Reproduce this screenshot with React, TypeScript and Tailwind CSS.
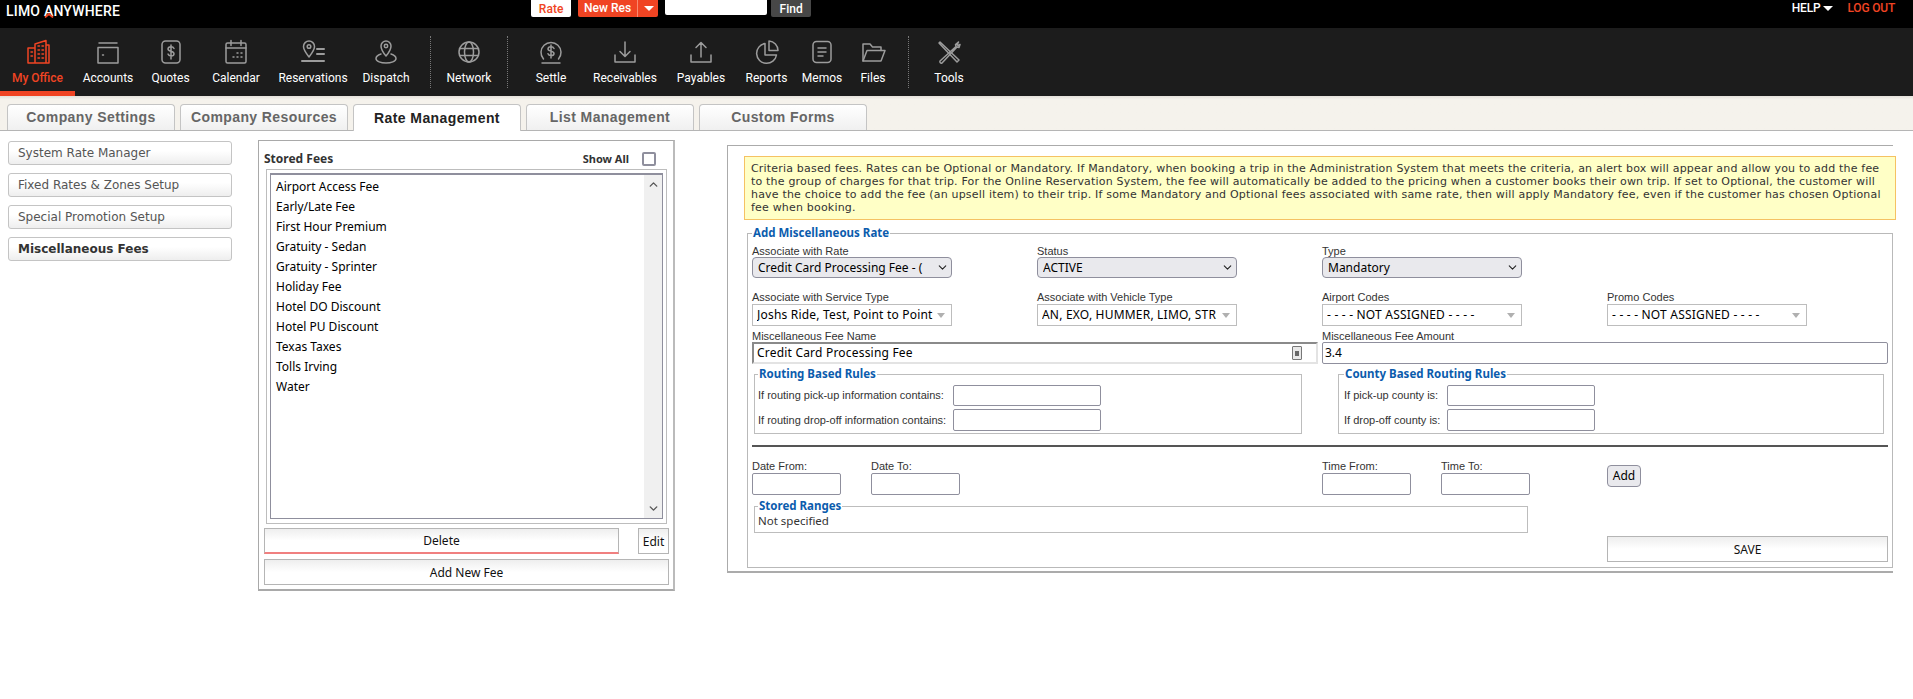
import React from "react";
import { ChevronDown, ChevronUp } from "lucide-react";

const stroke = {
  fill: "none",
  strokeWidth: 1.5,
  strokeLinecap: "round" as const,
  strokeLinejoin: "round" as const,
};

const Icon = ({ children, color }: { children: React.ReactNode; color?: string }) => (
  <svg width="28" height="28" viewBox="0 0 28 28" {...stroke} stroke={color || "#9c9c9c"}>
    {children}
  </svg>
);

const navItems = [
  {
    label: "My Office",
    w: "w-[75px]",
    active: true,
    icon: (
      <Icon color="#f04423">
        <path d="M4 10h7v15H4zM11 25V6l11-3.500V25M4 25h21M22 7h3v18" />
        <path d="M14 8h1.500M18 8h1.500M14 12h1.500M18 12h1.500M14 16h1.500M18 16h1.500M14 20h1.500M18 20h1.500M7 14h1.500M7 18h1.500" />
      </Icon>
    ),
  },
  {
    label: "Accounts",
    w: "w-[66px]",
    icon: (
      <Icon>
        <path d="M5 5h18M4 9.500h20V25H4z" />
        <path d="M8.500 17h1" />
      </Icon>
    ),
  },
  {
    label: "Quotes",
    w: "w-[59px]",
    icon: (
      <Icon>
        <rect x="5" y="3" width="18" height="22" rx="3.500" />
        <path d="M17 10.500c-.5-1.200-1.600-1.800-3-1.800-1.700 0-3 .8-3 2.300 0 3 6 1.500 6 4.700 0 1.500-1.300 2.300-3 2.300-1.500 0-2.600-.7-3-1.900M14 7v14" />
      </Icon>
    ),
  },
  {
    label: "Calendar",
    w: "w-[72px]",
    icon: (
      <Icon>
        <rect x="4" y="5" width="20" height="20" rx="1.500" />
        <path d="M4 10h20M9 2.500v5M19 2.500v5M15 15h1M19 15h1M11 19h1M15 19h1M19 19h1" />
      </Icon>
    ),
  },
  {
    label: "Reservations",
    w: "w-[82px]",
    icon: (
      <Icon>
        <path d="M10 19c-3-4-5.500-7-5.500-10.500a5.500 5.500 0 0 1 11 0C15.500 12 13 15 10 19z" />
        <circle cx="10" cy="8.500" r="1.800" />
        <path d="M18 11h7M18 16h7M3 23h22" strokeWidth="2" />
      </Icon>
    ),
  },
  {
    label: "Dispatch",
    w: "w-[64px]",
    icon: (
      <Icon>
        <path d="M14 18c-3-3.500-5-6.500-5-10a5 5 0 0 1 10 0c0 3.500-2 6.500-5 10z" />
        <circle cx="14" cy="8" r="1.700" />
        <path d="M9 16c-3 1-5 2.500-5 4.500C4 23.500 9 25 14 25s10-1.500 10-4.500c0-2-2-3.500-5-4.500" />
      </Icon>
    ),
  },
  { sep: true, spacer: "ml-[12px]" },
  {
    label: "Network",
    w: "w-[76px]",
    icon: (
      <Icon>
        <circle cx="14" cy="14" r="10" />
        <ellipse cx="14" cy="14" rx="4.500" ry="10" />
        <path d="M4.500 10.500h19M4.500 17.500h19" />
      </Icon>
    ),
  },
  { sep: true },
  {
    label: "Settle",
    w: "w-[86px]",
    icon: (
      <Icon>
        <path d="M6.500 21a10 10 0 1 1 15 0M5 25h18" />
        <path d="M17 10.500c-.5-1.100-1.500-1.700-3-1.700-1.700 0-3 .8-3 2.200 0 2.800 6 1.400 6 4.400 0 1.400-1.300 2.200-3 2.200-1.500 0-2.600-.7-3-1.800M14 7v13" />
      </Icon>
    ),
  },
  {
    label: "Receivables",
    w: "w-[62px]",
    icon: (
      <Icon>
        <path d="M14 4v14M9 13.500l5 5 5-5M4 17v7h20v-7" />
      </Icon>
    ),
  },
  {
    label: "Payables",
    w: "w-[90px]",
    icon: (
      <Icon>
        <path d="M14 19V5M9 9.500l5-5 5 5M4 17v7h20v-7" />
      </Icon>
    ),
  },
  {
    label: "Reports",
    w: "w-[41px]",
    icon: (
      <Icon>
        <path d="M12 5.500A10 10 0 1 0 23.500 17H12z" />
        <path d="M16 3a9.500 9.500 0 0 1 9 9.500h-9z" />
      </Icon>
    ),
  },
  {
    label: "Memos",
    w: "w-[70px]",
    icon: (
      <Icon>
        <rect x="5" y="3.500" width="18" height="21" rx="3.500" />
        <path d="M10 10h8M10 14h8M10 18h5" />
      </Icon>
    ),
  },
  {
    label: "Files",
    w: "w-[32px]",
    icon: (
      <Icon>
        <path d="M4 23V6h7l2.500 3H22v3.500" />
        <path d="M4 23l4-10.500h18L22 23z" />
      </Icon>
    ),
  },
  { sep: true, spacer: "ml-[19px]" },
  {
    label: "Tools",
    w: "w-[80px]",
    icon: (
      <Icon>
        <path d="M5 4l-1 1 18 19 2-2z" />
        <path d="M23.500 4l-3 2.500.5 2-16 14.500a1.500 1.500 0 0 0 2 2L22 9l2 .5 1-3-2 1-1-1z" />
      </Icon>
    ),
  },
];

const tabs = ["Company Settings", "Company Resources", "Rate Management", "List Management", "Custom Forms"];
const sideLinks = ["System Rate Manager", "Fixed Rates & Zones Setup", "Special Promotion Setup", "Miscellaneous Fees"];
const fees = [
  "Airport Access Fee",
  "Early/Late Fee",
  "First Hour Premium",
  "Gratuity - Sedan",
  "Gratuity - Sprinter",
  "Holiday Fee",
  "Hotel DO Discount",
  "Hotel PU Discount",
  "Texas Taxes",
  "Tolls Irving",
  "Water",
];

const gradientBtn =
  "flex items-center justify-center border border-[#b5b5b5] bg-gradient-to-b from-[#eeeeee] via-white to-white pt-[1px] text-[12px] text-[#111] font-['Noto_Sans',sans-serif]";

const labelText = "font-['Liberation_Sans',sans-serif] text-[11px] text-[#333] whitespace-nowrap";

const Label = ({ children }: { children: React.ReactNode }) => (
  <div className={`h-[14px] leading-[14px] ${labelText}`}>{children}</div>
);

const NativeSelect = ({ value }: { value: string }) => (
  <div className="mt-[-1px] flex h-[21px] w-[200px] items-center rounded-[4px] border border-[#8f8f9d] bg-[#e9e9ed] pl-[5px] pr-[2px] text-[12px] text-black">
    <span className="flex-1 overflow-hidden whitespace-nowrap">{value}</span>
    <ChevronDown size={13} strokeWidth={2} className="ml-[2px] shrink-0 text-[#222]" />
  </div>
);

const ComboBox = ({ value }: { value: string }) => (
  <div className="flex h-[22px] w-[200px] items-center border border-[#bdbdbd] bg-white pl-[4px] pr-[6px] text-[12px] tracking-[0.2px] text-black">
    <span className="flex-1 overflow-hidden whitespace-nowrap">{value}</span>
    <span className="h-0 w-0 border-x-[4px] border-t-[5px] border-x-transparent border-t-[#b0b0b0]" />
  </div>
);

const TextBox = ({ w, h = "h-[21px]" }: { w: string; h?: string }) => (
  <div className={`${w} ${h} shrink-0 rounded-[2px] border border-[#8f8f9d] bg-white`} />
);

const FieldLegend = ({ children }: { children: React.ReactNode }) => (
  <legend className="px-[1px] text-[11.500px] font-bold leading-[14px] text-[#0b5cad]">{children}</legend>
);

export default function App() {
  return (
    <div className="h-[699px] w-[1913px] overflow-hidden bg-white font-['Noto_Sans',sans-serif]">
      {/* top black bar */}
      <div className="flex h-[28px] items-start bg-black font-['Roboto',sans-serif]">
        <div className="ml-[6px] mt-[3px] whitespace-nowrap text-[14px] font-medium leading-[16px] tracking-[0.2px] text-white">
          LIMO{" "}
          <span className="relative">
            A
            <svg className="absolute bottom-[1px] left-0" width="10" height="6" viewBox="0 0 10 6">
              <path d="M1 5.500L5 2l4 3.500" fill="none" stroke="#f04423" strokeWidth="1.800" />
            </svg>
          </span>
          NYWHERE
        </div>
        <div className="ml-[411px] flex h-[17px] w-[40px] items-center justify-center rounded-b-[2px] bg-white text-[12px] font-medium text-[#f04423]">
          Rate
        </div>
        <div className="ml-[7px] flex h-[17px] w-[80px] items-center rounded-b-[2px] bg-[#f04423] text-[12px] font-medium text-white">
          <span className="w-[60px] border-r border-[#f98a70] text-center leading-[17px]">New Res</span>
          <span className="ml-[6px] h-0 w-0 border-x-[5px] border-t-[5px] border-x-transparent border-t-white" />
        </div>
        <div className="ml-[7px] h-[15px] w-[102px] rounded-b-[2px] bg-white" />
        <div className="ml-[4px] flex h-[17px] w-[40px] items-center justify-center rounded-b-[2px] bg-[#474747] text-[12px] font-medium text-white">
          Find
        </div>
        <div className="ml-auto mr-[18px] mt-[1px] flex items-center text-[12px] font-medium leading-[14px] tracking-[-0.2px]">
          <span className="text-white">HELP</span>
          <span className="ml-[3px] h-0 w-0 border-x-[5px] border-t-[5px] border-x-transparent border-t-white" />
          <span className="ml-[14px] text-[#f04423]">LOG OUT</span>
        </div>
      </div>

      {/* main nav */}
      <div className="flex h-[68px] items-stretch bg-[#1c1c1c] font-['Roboto',sans-serif]">
        {navItems.map((item, i) =>
          item.sep ? (
            <div key={i} className={`mt-[8px] h-[52px] border-l border-dotted border-[#777] ${item.spacer || ""}`} />
          ) : (
            <div
              key={i}
              className={`flex shrink-0 flex-col items-center whitespace-nowrap pt-[10px] ${item.w} ${
                item.active ? "border-b-[5px] border-[#f04423] text-[#f04423]" : "text-white"
              }`}
            >
              <div className="flex h-[28px] items-center justify-center">{item.icon}</div>
              <div className={`mt-[4px] text-[12px] leading-[16px] ${item.active ? "font-medium" : ""}`}>{item.label}</div>
            </div>
          ),
        )}
      </div>

      {/* tabs */}
      <div className="flex h-[35px] items-end gap-[5px] border-b border-[#b5b5b5] bg-gradient-to-b from-[#e4e1db] from-[0%] via-[#f5f2ec] via-[10%] to-[#f5f2ec] pl-[7px] font-['Liberation_Sans',sans-serif]">
        {tabs.map((t, i) => (
          <div
            key={t}
            className={`flex h-[26px] w-[168px] items-center justify-center rounded-t-[4px] border border-b-0 border-[#c4c4c4] text-[14px] font-bold tracking-[0.4px] ${
              i === 2
                ? "relative top-[1px] h-[27px] bg-white text-[#222]"
                : "bg-gradient-to-b from-white to-[#f0f0f0] text-[#666]"
            }`}
          >
            {t}
          </div>
        ))}
      </div>

      <div className="flex items-start">
        {/* side menu */}
        <div className="ml-[8px] mt-[10px] flex w-[224px] flex-col gap-[8px]">
          {sideLinks.map((s, i) => (
            <div
              key={s}
              className={`flex h-[24px] items-center rounded-[3px] border border-[#c4c4c4] bg-gradient-to-b from-white from-[40%] to-[#eeeeee] pl-[9px] font-['DejaVu_Sans',sans-serif] text-[12px] ${
                i === 3 ? "font-bold text-[#333]" : "text-[#555]"
              }`}
            >
              {s}
            </div>
          ))}
        </div>

        {/* stored fees */}
        <div className="ml-[26px] mt-[9px] h-[451px] w-[417px] border border-b-2 border-r-2 border-[#a9a9a9] border-r-[#bbbbbb] pl-[5px]">
          <div className="flex h-[28px] items-center pt-[8px]">
            <span className="text-[12px] font-bold text-[#333]">Stored Fees</span>
            <span className="ml-[auto] text-[11px] font-bold text-[#333]">Show All</span>
            <span className="ml-[13px] mr-[17px] h-[14px] w-[14px] rounded-[2px] border-2 border-[#8f8f9d] bg-white" />
          </div>
          <div className="ml-[2px] h-[355px] w-[401px] border border-[#bdbdbd] p-[3px]">
            <div className="flex h-[346px] w-[393px] border border-[#8f8f9d] border-t-2">
              <div className="flex-1 pl-[5px] pt-[2px] text-[12px] leading-[20px] text-black">
                {fees.map((f) => (
                  <div key={f}>{f}</div>
                ))}
              </div>
              <div className="flex w-[18px] flex-col items-center justify-between bg-[#f0f0f0] pb-[3px] pt-[3px] text-[#555]">
                <ChevronUp size={13} strokeWidth={2.500} />
                <ChevronDown size={13} strokeWidth={2.500} />
              </div>
            </div>
          </div>
          <div className="mt-[4px] flex justify-between pr-[4px]">
            <div className={`${gradientBtn} h-[26px] w-[355px] [border-bottom-color:#f08080] border-b-[2px]`}>Delete</div>
            <div className={`${gradientBtn} h-[26px] w-[31px]`}>Edit</div>
          </div>
          <div className={`${gradientBtn} mt-[5px] h-[26px] w-[405px]`}>Add New Fee</div>
        </div>

        {/* right form */}
        <div className="ml-[52px] mt-[14px] h-[428px] w-[1166px] border border-b-2 border-r-0 border-[#ababab] pl-[16px] pr-0 pt-[10px]">
          <div className="mr-[-3px] h-[64px] w-[1152px] whitespace-nowrap border border-[#f5c263] bg-[#ffffc6] pl-[6px] pt-[5px] font-['DejaVu_Sans',sans-serif] text-[11px] leading-[13px] tracking-[0.19px] text-[#333]">
            <div>
              Criteria based fees. Rates can be Optional or Mandatory. If Mandatory, when booking a trip in the Administration System that meets the criteria, an alert box will appear and allow you to add the fee
            </div>
            <div>
              to the group of charges for that trip. For the Online Reservation System, the fee will automatically be added to the pricing when a customer books their own trip. If set to Optional, the customer will
            </div>
            <div>
              have the choice to add the fee (an upsell item) to their trip. If some Mandatory and Optional fees associated with same rate, then will apply Mandatory fee, even if the customer has chosen Optional
            </div>
            <div>fee when booking.</div>
          </div>

          <fieldset className="ml-[3px] mt-[6px] h-[342px] w-[1146px] border border-r-[1px] border-[#b9b9b9] pl-[4px]">
            <FieldLegend>Add Miscellaneous Rate</FieldLegend>
            <div className="grid grid-cols-[285px_285px_285px_1fr] pt-[4px]">
              <div>
                <Label>Associate with Rate</Label>
                <NativeSelect value="Credit Card Processing Fee - (" />
              </div>
              <div>
                <Label>Status</Label>
                <NativeSelect value="ACTIVE" />
              </div>
              <div>
                <Label>Type</Label>
                <NativeSelect value="Mandatory" />
              </div>
            </div>
            <div className="mt-[12px] grid grid-cols-[285px_285px_285px_1fr]">
              <div>
                <Label>Associate with Service Type</Label>
                <ComboBox value="Joshs Ride, Test, Point to Point" />
              </div>
              <div>
                <Label>Associate with Vehicle Type</Label>
                <ComboBox value="AN, EXO, HUMMER, LIMO, STR" />
              </div>
              <div>
                <Label>Airport Codes</Label>
                <ComboBox value="- - - - NOT ASSIGNED - - - -" />
              </div>
              <div>
                <Label>Promo Codes</Label>
                <ComboBox value="- - - - NOT ASSIGNED - - - -" />
              </div>
            </div>
            <div className="mt-[3px] grid grid-cols-[570px_1fr]">
              <div>
                <Label>Miscellaneous Fee Name</Label>
                <div className="mt-[-1px] flex h-[22px] w-[566px] items-center border-2 border-[#e3e3e3] border-l-[#8a8a8a] border-t-[#8a8a8a] pl-[3px] pr-[14px] text-[12px] tracking-[0.2px] text-black">
                  <span className="flex-1">Credit Card Processing Fee</span>
                  <span className="flex h-[14px] w-[10px] items-center justify-center rounded-[1px] border border-[#777] bg-[#e8e8e8]">
                    <span className="h-[5px] w-[4px] bg-[#666]" />
                  </span>
                </div>
              </div>
              <div>
                <Label>Miscellaneous Fee Amount</Label>
                <div className="mt-[-1px] flex h-[22px] w-[566px] items-center rounded-[2px] border border-[#8f8f9d] pl-[2px] text-[12px] text-black">
                  3.4
                </div>
              </div>
            </div>

            <div className="mt-[3px] grid grid-cols-[585px_1fr]">
              <fieldset className="ml-[2px] h-[67px] w-[548px] border border-[#bdbdbd] pl-[3px]">
                <FieldLegend>Routing Based Rules</FieldLegend>
                <div className="mt-[4px] flex h-[21px] items-center">
                  <span className={`w-[195px] ${labelText}`}>If routing pick-up information contains:</span>
                  <TextBox w="w-[148px]" />
                </div>
                <div className="mt-[3px] flex h-[22px] items-center">
                  <span className={`w-[195px] ${labelText}`}>If routing drop-off information contains:</span>
                  <TextBox w="w-[148px]" h="h-[22px]" />
                </div>
              </fieldset>
              <fieldset className="ml-[1px] h-[67px] w-[546px] border border-[#bdbdbd] pl-[5px]">
                <FieldLegend>County Based Routing Rules</FieldLegend>
                <div className="mt-[4px] flex h-[21px] items-center">
                  <span className={`w-[103px] ${labelText}`}>If pick-up county is:</span>
                  <TextBox w="w-[148px]" />
                </div>
                <div className="mt-[3px] flex h-[22px] items-center">
                  <span className={`w-[103px] ${labelText}`}>If drop-off county is:</span>
                  <TextBox w="w-[148px]" h="h-[22px]" />
                </div>
              </fieldset>
            </div>

            <div className="mt-[11px] h-[2px] w-[1136px] bg-[#555]" />

            <div className="mt-[12px] grid grid-cols-[570px_285px_1fr]">
              <div className="flex gap-[30px]">
                <div>
                  <Label>Date From:</Label>
                  <TextBox w="w-[89px]" h="h-[22px]" />
                </div>
                <div>
                  <Label>Date To:</Label>
                  <TextBox w="w-[89px]" h="h-[22px]" />
                </div>
              </div>
              <div className="flex gap-[30px]">
                <div>
                  <Label>Time From:</Label>
                  <TextBox w="w-[89px]" h="h-[22px]" />
                </div>
                <div>
                  <Label>Time To:</Label>
                  <TextBox w="w-[89px]" h="h-[22px]" />
                </div>
              </div>
              <div className="pt-[6px]">
                <div className="flex h-[22px] w-[34px] items-center justify-center rounded-[4px] border border-[#8f8f9d] bg-[#e9e9ed] text-[12px] text-black">
                  Add
                </div>
              </div>
            </div>

            <div className="grid grid-cols-[855px_1fr]">
              <fieldset className="ml-[2px] mt-[4px] h-[34px] w-[774px] border border-[#bdbdbd] pl-[3px]">
                <FieldLegend>Stored Ranges</FieldLegend>
                <div className="pt-[1px] text-[11.500px] leading-[14px] text-[#333]">Not specified</div>
              </fieldset>
              <div className={`${gradientBtn} mt-[41px] h-[26px] w-[281px]`}>SAVE</div>
            </div>
          </fieldset>
        </div>
      </div>
    </div>
  );
}
